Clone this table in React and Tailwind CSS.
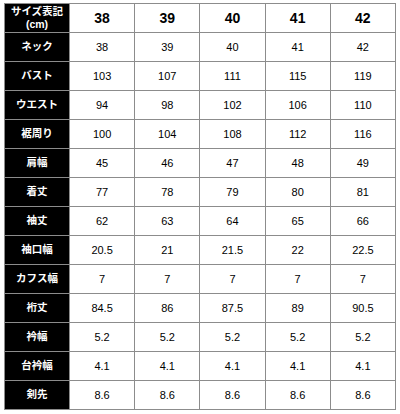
import React from "react";

const sizes = ["38", "39", "40", "41", "42"];

const rows = [
  ["ネック", ["38", "39", "40", "41", "42"]],
  ["バスト", ["103", "107", "111", "115", "119"]],
  ["ウエスト", ["94", "98", "102", "106", "110"]],
  ["裾周り", ["100", "104", "108", "112", "116"]],
  ["肩幅", ["45", "46", "47", "48", "49"]],
  ["着丈", ["77", "78", "79", "80", "81"]],
  ["袖丈", ["62", "63", "64", "65", "66"]],
  ["袖口幅", ["20.5", "21", "21.5", "22", "22.5"]],
  ["カフス幅", ["7", "7", "7", "7", "7"]],
  ["裄丈", ["84.5", "86", "87.5", "89", "90.5"]],
  ["衿幅", ["5.2", "5.2", "5.2", "5.2", "5.2"]],
  ["台衿幅", ["4.1", "4.1", "4.1", "4.1", "4.1"]],
  ["剣先", ["8.6", "8.6", "8.6", "8.6", "8.6"]],
];

const font = "font-['Liberation_Sans','Noto_Sans_CJK_JP',sans-serif]";

export default function App() {
  return (
    <div className={`bg-white w-[400px] h-[414px] pt-[3px] pl-[4px] ${font}`}>
      <table className="table-fixed border-collapse w-[392px]">
        <colgroup>
          <col className="w-[65px]" />
          {sizes.map((s) => (
            <col key={s} />
          ))}
        </colgroup>
        <thead>
          <tr className="h-[29px]">
            <th className="bg-black text-white text-[10.5px] leading-[13px] font-bold border border-[#8c8c8c] p-0">
              サイズ表記
              <br />
              (cm)
            </th>
            {sizes.map((s) => (
              <th
                key={s}
                className="text-[14px] font-bold text-black border border-[#8c8c8c] p-0"
              >
                {s}
              </th>
            ))}
          </tr>
        </thead>
        <tbody>
          {rows.map(([label, vals]) => (
            <tr key={label} className="h-[29px]">
              <th className="bg-black text-white text-[10.5px] font-bold border border-[#8c8c8c] p-0">
                {label}
              </th>
              {vals.map((v, i) => (
                <td
                  key={i}
                  className="text-center text-[11px] text-black border border-[#8c8c8c] p-0"
                >
                  {v}
                </td>
              ))}
            </tr>
          ))}
        </tbody>
      </table>
    </div>
  );
}
